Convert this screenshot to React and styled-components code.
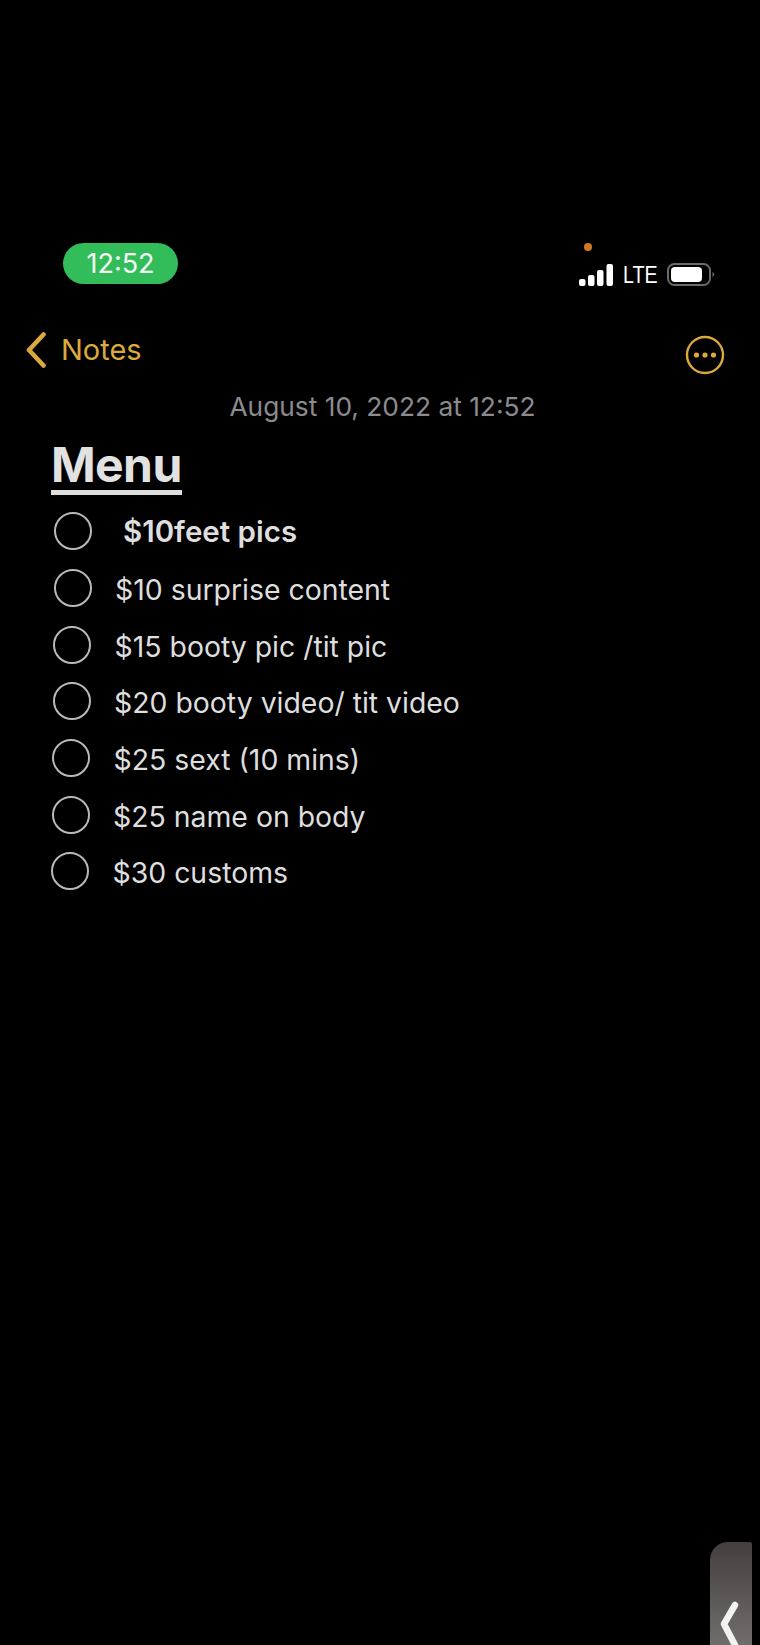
import React from 'react';
import styled, { createGlobalStyle } from 'styled-components';

const GOLD = '#dba93c';

const items = [
  { label: '$10feet pics', circleX: 54, textX: 123, bold: true },
  { label: '$10 surprise content', circleX: 53.5, textX: 115 },
  { label: '$15 booty pic /tit pic', circleX: 53, textX: 114.5 },
  { label: '$20 booty video/ tit video', circleX: 52.5, textX: 114 },
  { label: '$25 sext (10 mins)', circleX: 52, textX: 113.5 },
  { label: '$25 name on body', circleX: 51.5, textX: 113 },
  { label: '$30 customs', circleX: 51, textX: 112.5 },
];

const App = () => {
  return (
    <>
      <GlobalStyle />
      <Screen>
        <StatusBar>
          <TimePill>12:52</TimePill>
          <StatusRight>
            <PrivacyDot />
            <StatusIcons>
              <svg width="34" height="23" viewBox="0 0 34 23" fill="#fff">
                <rect x="0" y="15" width="6.5" height="7" rx="2" />
                <rect x="9" y="11" width="6.5" height="11" rx="2" />
                <rect x="18" y="6" width="6.5" height="16" rx="2" />
                <rect x="27.5" y="0" width="6.5" height="22" rx="2" />
              </svg>
              <Network>LTE</Network>
              <svg width="48" height="24" viewBox="0 0 48 24">
                <rect x="1" y="1" width="42" height="21" rx="6.5" fill="none" stroke="#6a6a6a" strokeWidth="2" />
                <rect x="4" y="4" width="31" height="15" rx="4" fill="#fff" />
                <path d="M45.5 8.5 L47.5 11.5 L45.5 14.5 Z" fill="#6a6a6a" />
              </svg>
            </StatusIcons>
          </StatusRight>
        </StatusBar>

        <NavBar>
          <BackLink>
            <svg width="20" height="36" viewBox="0 0 20 36" fill="none">
              <path d="M17.5 2.5 L3 18 L17.5 33.5" stroke={GOLD} strokeWidth="4.6" strokeLinecap="round" strokeLinejoin="round" />
            </svg>
            <BackLabel>Notes</BackLabel>
          </BackLink>
          <MoreButton>
            <svg width="40" height="40" viewBox="0 0 40 40" fill={GOLD}>
              <circle cx="20" cy="20" r="18" fill="none" stroke={GOLD} strokeWidth="2.4" />
              <circle cx="11.5" cy="20" r="2.6" />
              <circle cx="20" cy="20" r="2.6" />
              <circle cx="28.5" cy="20" r="2.6" />
            </svg>
          </MoreButton>
        </NavBar>

        <DateLine>August 10, 2022 at 12:52</DateLine>
        <Title>Menu</Title>

        <Checklist>
          {items.map((item) => (
            <Row key={item.label}>
              <Circle $x={item.circleX} />
              <Label $x={item.textX - item.circleX - 38} $bold={item.bold}>{item.label}</Label>
            </Row>
          ))}
        </Checklist>

        <SideHandle>
          <svg width="20" height="44" viewBox="0 0 20 44" fill="none">
            <path d="M15 4 L4 23 L15 44" stroke="#f2f2f2" strokeWidth="6.5" strokeLinecap="round" strokeLinejoin="round" />
          </svg>
        </SideHandle>
      </Screen>
    </>
  );
};

const GlobalStyle = createGlobalStyle`
  html, body {
    margin: 0;
    padding: 0;
    background: #000;
  }
`;

const Screen = styled.div`
  position: relative;
  width: 760px;
  height: 1645px;
  overflow: hidden;
  background: #000;
  font-family: Inter, "Liberation Sans", sans-serif;
`;

const StatusBar = styled.div`
  display: flex;
  justify-content: space-between;
  align-items: flex-start;
  padding: 243px 45px 0 63px;
`;

const TimePill = styled.div`
  width: 115px;
  height: 41px;
  border-radius: 21px;
  background: #32bd5a;
  color: #f4fff6;
  font-size: 27px;
  line-height: 41px;
  text-align: center;
`;

const StatusRight = styled.div`
  display: flex;
  flex-direction: column;
  align-items: flex-start;
`;

const PrivacyDot = styled.div`
  width: 8px;
  height: 8px;
  margin-left: 5px;
  border-radius: 50%;
  background: #cf7a22;
`;

const StatusIcons = styled.div`
  display: flex;
  align-items: center;
  margin-top: 12px;
`;

const Network = styled.span`
  display: inline-block;
  width: 35px;
  margin: 0 9px 0 10px;
  color: #fff;
  font-family: "Liberation Sans", sans-serif;
  font-size: 24px;
  line-height: 24px;
  transform: scaleX(0.82);
  transform-origin: left center;
`;

const NavBar = styled.div`
  display: flex;
  justify-content: space-between;
  align-items: flex-start;
  margin-top: 45px;
  padding: 0 35px 0 26px;
`;

const BackLink = styled.div`
  display: flex;
  align-items: center;
  gap: 15px;
`;

const BackLabel = styled.span`
  color: ${GOLD};
  font-size: 29px;
  line-height: 36px;
`;

const MoreButton = styled.div`
  margin-top: 3px;
  height: 40px;
`;

const DateLine = styled.div`
  margin-top: 16px;
  padding-left: 5px;
  color: #8b8b8f;
  font-size: 26.3px;
  line-height: 32px;
  text-align: center;
`;

const Title = styled.h1`
  display: inline-block;
  margin: 17px 0 0 51px;
  border-bottom: 5px solid #dedede;
  color: #e2e2e2;
  font-size: 48px;
  font-weight: 700;
  letter-spacing: -0.6px;
  line-height: 50px;
`;

const Checklist = styled.div`
  display: flex;
  flex-direction: column;
  margin-top: 8px;
`;

const Row = styled.div`
  display: flex;
  align-items: center;
  height: 56.7px;
`;

const Circle = styled.div`
  box-sizing: border-box;
  flex: none;
  width: 38px;
  height: 38px;
  margin-left: ${(p) => p.$x}px;
  border: 2px solid #b9b9b9;
  border-radius: 50%;
`;

const Label = styled.span`
  margin-left: ${(p) => p.$x}px;
  padding-top: ${(p) => (p.$bold ? 0 : 4)}px;
  color: #dedede;
  font-size: ${(p) => (p.$bold ? 29.5 : 28.4)}px;
  font-weight: ${(p) => (p.$bold ? 600 : 400)};
  line-height: 38px;
`;

const SideHandle = styled.div`
  position: absolute;
  right: 8px;
  bottom: 0;
  box-sizing: border-box;
  display: flex;
  align-items: flex-start;
  width: 42px;
  height: 103px;
  padding: 59px 0 0 10px;
  overflow: hidden;
  border-radius: 18px 2px 0 0;
  background: linear-gradient(#443f3e, #706d6c);
`;

export default App;
